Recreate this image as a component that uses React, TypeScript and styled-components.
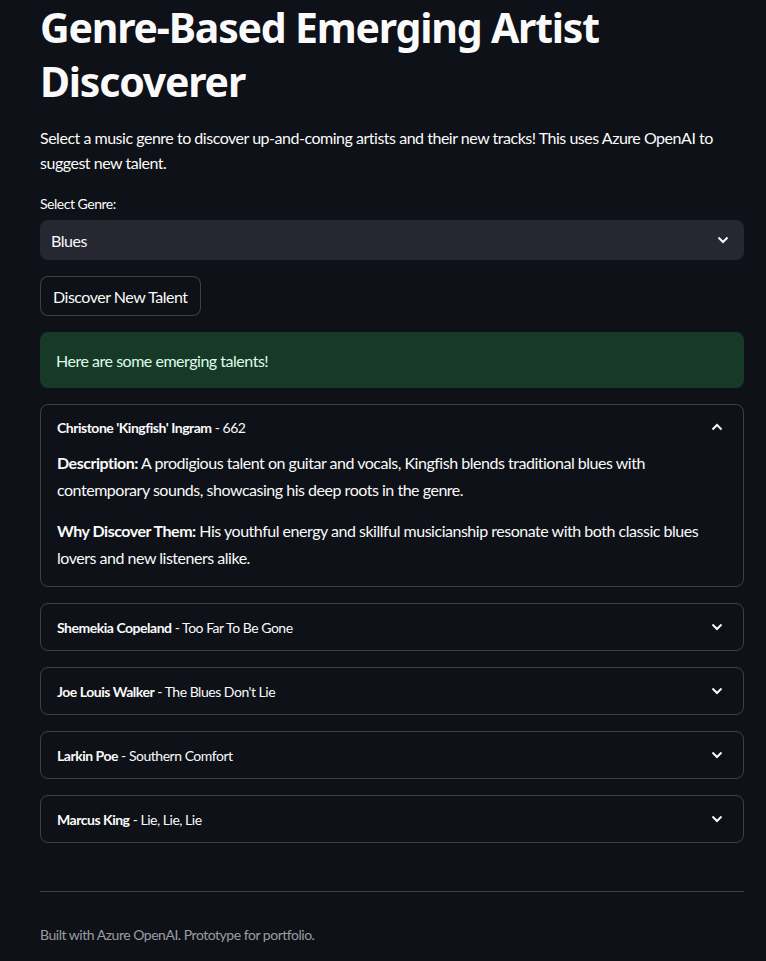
import React from "react";
import styled, { createGlobalStyle } from "styled-components";

const Global = createGlobalStyle`
  html, body { margin: 0; padding: 0; background: #0e1117; }
  body {
    font-family: "Lato", "Noto Sans", sans-serif;
    color: #fafafa;
    letter-spacing: -0.03em;
    -webkit-font-smoothing: antialiased;
  }
  * { box-sizing: border-box; }
`;

const Main = styled.main`
  padding: 0 22px 40px 40px;
  display: flex;
  flex-direction: column;
`;

const Title = styled.h1`
  font-family: "Noto Sans", "Lato", sans-serif;
  font-size: 41px;
  font-weight: 700;
  line-height: 54px;
  letter-spacing: -1.2px;
  margin: 0 0 17px 0;
`;

const Intro = styled.p`
  font-size: 16px;
  line-height: 25px;
  margin: 0 0 21px 0;
`;

const Label = styled.label`
  font-size: 14px;
  line-height: 16px;
  display: block;
  margin-bottom: 8px;
`;

const Select = styled.div`
  height: 40px;
  background: #262730;
  border-radius: 8px;
  display: flex;
  align-items: center;
  justify-content: space-between;
  padding: 0 15px 0 11px;
  font-size: 16px;
  margin-bottom: 16px;
`;

const Button = styled.button`
  align-self: flex-start;
  height: 40px;
  padding: 0 12px;
  background: #0e1117;
  color: #fafafa;
  border: 1px solid rgba(250, 250, 250, 0.2);
  border-radius: 8px;
  font-family: inherit;
  font-size: 16px;
  letter-spacing: -0.03em;
  margin-bottom: 16px;
`;

const Alert = styled.div`
  height: 56px;
  background: #173928;
  color: #dffde9;
  border-radius: 8px;
  padding: 0 16px;
  display: flex;
  align-items: center;
  font-size: 16px;
  margin-bottom: 16px;
`;

const Expander = styled.div`
  border: 1px solid rgba(250, 250, 250, 0.2);
  border-radius: 8px;
  margin-bottom: 16px;
`;

const Summary = styled.div<{ $open?: boolean }>`
  height: ${(p) => (p.$open ? "44px" : "46px")};
  display: flex;
  align-items: center;
  justify-content: space-between;
  padding: 0 20px 0 16px;
  font-size: 14px;
`;

const Strong = styled.strong`
  font-weight: 700;
`;

const Body = styled.div`
  padding: 0 16px 15px 16px;
`;

const Para = styled.p`
  font-size: 16px;
  line-height: 27px;
  margin: 0 0 14px 0;
  &:last-child { margin-bottom: 0; }
`;

const Divider = styled.hr`
  border: none;
  border-top: 1px solid rgba(250, 250, 250, 0.2);
  margin: 32px 0 34px 0;
`;

const Footer = styled.p`
  margin: 0;
  font-size: 14px;
  color: rgba(250, 250, 250, 0.6);
`;

const Chevron = ({ up }: { up?: boolean }) => (
  <svg width="12" height="8" viewBox="0 0 12 8" fill="none">
    <path
      d={up ? "M1.5 6.5 L6 2 L10.5 6.5" : "M1.5 1.5 L6 6 L10.5 1.5"}
      stroke="#fafafa"
      strokeWidth="2"
    />
  </svg>
);

const items = [
  { name: "Shemekia Copeland", track: "Too Far To Be Gone" },
  { name: "Joe Louis Walker", track: "The Blues Don't Lie" },
  { name: "Larkin Poe", track: "Southern Comfort" },
  { name: "Marcus King", track: "Lie, Lie, Lie" },
];

export default function App() {
  return (
    <>
      <Global />
      <Main>
        <Title>Genre-Based Emerging Artist Discoverer</Title>
        <Intro>
          Select a music genre to discover up-and-coming artists and their new tracks! This uses Azure OpenAI to
          suggest new talent.
        </Intro>
        <Label>Select Genre:</Label>
        <Select>
          <span>Blues</span>
          <Chevron />
        </Select>
        <Button>Discover New Talent</Button>
        <Alert>Here are some emerging talents!</Alert>
        <Expander>
          <Summary $open>
            <span>
              <Strong>Christone 'Kingfish' Ingram</Strong> - 662
            </span>
            <Chevron up />
          </Summary>
          <Body>
            <Para>
              <Strong>Description:</Strong> A prodigious talent on guitar and vocals, Kingfish blends traditional blues with
              contemporary sounds, showcasing his deep roots in the genre.
            </Para>
            <Para>
              <Strong>Why Discover Them:</Strong> His youthful energy and skillful musicianship resonate with both classic blues
              lovers and new listeners alike.
            </Para>
          </Body>
        </Expander>
        {items.map((it) => (
          <Expander key={it.name}>
            <Summary>
              <span>
                <Strong>{it.name}</Strong> - {it.track}
              </span>
              <Chevron />
            </Summary>
          </Expander>
        ))}
        <Divider />
        <Footer>Built with Azure OpenAI. Prototype for portfolio.</Footer>
      </Main>
    </>
  );
}
